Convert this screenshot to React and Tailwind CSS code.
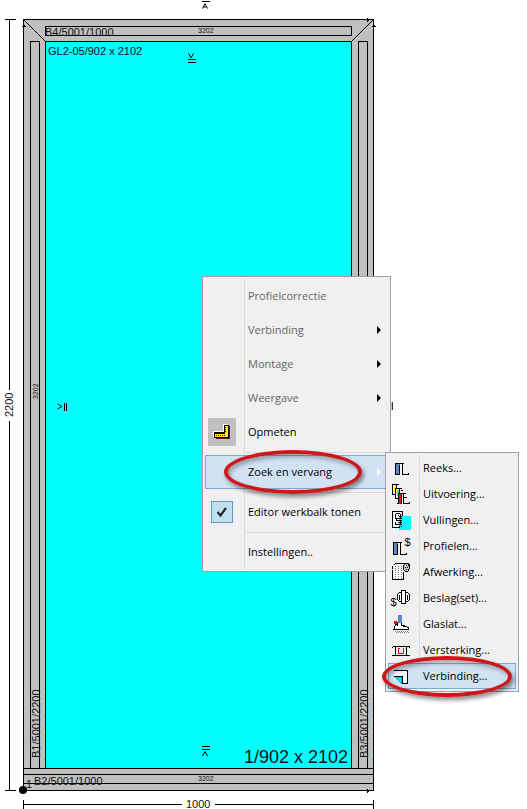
import React from "react";

const INK = "#000000";

/* Technical drawing of the window element */
function FrameDrawing() {
  return (
    <svg
      className="block h-[809px] w-[400px] shrink-0 font-['Liberation_Sans',Arial,sans-serif]"
      viewBox="0 0 400 809"
      role="img"
      aria-label="GL2-05/902 x 2102"
    >
      <g transform="translate(0.5 0.5)" stroke={INK} fill="none" shapeRendering="crispEdges">
        {/* height dimension */}
        <path d="M4 19H15M4 790H15M9 19V389M9 420V790" />
        {/* profiles and glass */}
        <rect x="23" y="19" width="350" height="771" fill="#c0c0c0" />
        <rect x="45" y="41" width="306" height="727" fill="#00ffff" />
        <rect x="45" y="26" width="306" height="9" />
        <rect x="30" y="41" width="9" height="727" />
        <rect x="358" y="41" width="9" height="727" />
        <path d="M23 768H373M23 774H373M23 783H373M23 19L45 41M373 19L351 41" />
        {/* direction arrows */}
        <path d="M21 26H25M22 25H24M371 26H375M372 25H374M367 17V21M368 18V20M367 788V792M368 789V791" />
        {/* width dimension */}
        <path d="M23 799V809M373 799V809M23 804H181M214 804H373" />
        {/* opening marks */}
        <path d="M201 1H209M187 59H195M187 62H195M201 746H209M201 749H209M64 402V410M66 402V410" />
      </g>
      <path d="M202.5 8.5L205 3.5L207.5 8.5M203.5 7H206.500M188.500 53.500L191 58L193.500 53.500M202.500 756L205 751.500L207.500 756M57.500 404L62 406.500L57.500 409" stroke={INK} fill="none" />
      <path d="M392.500 402V410" stroke="#26346b" />
      <path d="M391.500 402V410" stroke="#dcc49a" />
      <circle cx="23" cy="790" r="4" />
      <g fontSize="11" fill="#111111">
        <text x="45" y="36">B4/5001/1000</text>
        <text x="48" y="55">GL2-05/902 x 2102</text>
        <text x="26" y="788">1</text>
        <text x="34" y="785">B2/5001/1000</text>
        <text x="186" y="808">1000</text>
        <text transform="translate(13 417) rotate(-90)">2200</text>
        <text transform="translate(40 758) rotate(-90)">B1/5001/2200</text>
        <text transform="translate(368 758) rotate(-90)">B3/5001/2200</text>
      </g>
      <g fontSize="7" fill="#111111">
        <text x="198" y="33">3202</text>
        <text x="198" y="781">3202</text>
        <text transform="translate(38 399) rotate(-90)">3202</text>
      </g>
      <text x="244" y="763" fontSize="18" fill="#111111">1/902 x 2102</text>
    </svg>
  );
}

function Profile({ x, y, fill, h = 11 }) {
  return (
    <g transform={`translate(${x} ${y})`}>
      <rect x="1" y="0" width="4" height={h} fill={fill} stroke="none" />
      <path d={`M0 0H9M1 0V${h}M5 1V${h}M8 0V${h}M0 ${h}H5M8 ${h}H14M14 ${h}V${h - 2}`} />
    </g>
  );
}

const Dollar = ({ x, y }) => (
  <text x={x} y={y} fontSize="11" fill={INK} stroke="none" className="font-['Liberation_Sans',Arial,sans-serif]">
    $
  </text>
);

const Pattern = ({ id, color, back }) => (
  <pattern id={id} width="2" height="2" patternUnits="userSpaceOnUse">
    <rect width="2" height="2" fill={back} />
    <path d="M0 0h1v1h-1zM1 1h1v1h-1z" fill={color} stroke="none" />
  </pattern>
);

const icons = {
  reeks: <Profile x={6} y={8} fill="url(#blueDots)" />,
  uitvoering: (
    <>
      <path d="M3 3H10M4 3V13M4 13H6" />
      <rect x="5" y="4" width="3" height="6" fill="#ffff00" stroke="none" />
      <path d="M8 3V7M6 7H13M7 7V17M7 17H9" />
      <rect x="8" y="8" width="3" height="6" fill="#00ffff" stroke="none" />
      <path d="M11 7V11M9 12H17M10 12V22M8 22H13" />
      <rect x="10" y="12" width="3" height="10" fill="#e01515" stroke="none" />
      <path d="M9 12H17M13 12V22M15 12V22M15 22H21M21 20V22M12 9H14M15 16H18" />
    </>
  ),
  vullingen: (
    <>
      <path d="M4 4H14V20H4Z" fill="#ffffff" />
      <rect x="10" y="8" width="12" height="14" fill="#00ffff" stroke="none" />
      <path d="M7 6H11L12 7V11H8V13H12V17H7V14M7 6V11M4 20H11M9 8H10M9 15H10" />
      <path d="M10 9H14M10 11H14M10 13H14M10 15H14M10 17H14M10 19H14" strokeDasharray="1 1" />
    </>
  ),
  profielen: (
    <>
      <Profile x={4} y={9} h={12} fill="url(#blueDots)" />
      <Dollar x={16} y={12} />
    </>
  ),
  afwerking: (
    <>
      <path d="M6 4H18M4 6V9M5 5H6M4 10V20H15V12" fill="#ffffff" />
      <path d="M6 7H15M6 9H15M6 11H15M6 13H14M6 15H14M6 17H14M6 19H14" stroke="#777777" strokeDasharray="1 2" />
      <path d="M17 4H20L21 6V9L19 12H17L15 10V6Z" fill="#c9c9c9" />
      <path d="M17 6H20M16 8H20M17 10H19" strokeDasharray="1 1" />
    </>
  ),
  beslag: (
    <>
      <Dollar x={2} y={20} />
      <path d="M11 7H19L21 9V14L19 16H11L9 14V9Z" fill="#ffffff" />
      <path d="M13 5H17V18H13ZM11 9V14M19 9V14" fill="#ffffff" />
    </>
  ),
  glaslat: (
    <>
      <path d="M10 10L6 15V18H20V16L13 14V10Z" fill="#ffffff" />
      <path d="M9 12V14M5 18H20M13 14H16M5 17V18" />
      <rect x="9" y="3" width="4" height="8" fill="url(#blueDots)" stroke="none" />
      <path d="M6 10H8V12H6Z" fill="#e01515" stroke="#e01515" />
      <path d="M6 20H20M7 21H20" stroke="#888888" strokeDasharray="1 1" />
    </>
  ),
  versterking: (
    <>
      <path d="M4 9H21M4 9V10M21 9V10M7 9V18M18 9V18M4 18H9M16 18H21M4 17V18M21 17V18M9 18H16" />
      <path d="M11 11H10V16H15V11H14" stroke="#e01515" />
    </>
  ),
  verbinding: (
    <>
      <path d="M5 13V7H19V20H14V13Z" fill="#f4f7fb" stroke="none" />
      <path d="M5 7H19V20H14V13H5" />
      <path d="M7 14H13V20Z" fill="#00e5ef" stroke="#00bccc" />
    </>
  ),
};

const Arrow = ({ className }) => (
  <svg className={`mr-[7px] h-2 w-1 shrink-0 ${className}`} viewBox="0 0 4 8" aria-hidden="true">
    <path d="M0 0L4 4L0 8Z" fill="currentColor" />
  </svg>
);

const Ring = ({ className }) => (
  <span
    aria-hidden="true"
    className={`pointer-events-none absolute z-20 rounded-[50%] border-4 border-[#cd1719] shadow-[2px_3px_4px_rgba(0,0,0,0.45),inset_2px_3px_4px_rgba(0,0,0,0.3)] ${className}`}
  />
);

const Gutter = ({ children, plain }) => (
  <span
    className={`flex w-10 shrink-0 items-center justify-center self-stretch border-r ${
      plain ? "border-transparent" : "border-[#d9d9d9]"
    }`}
  >
    {children}
  </span>
);

function MenuRow({ label, disabled, arrow, icon }) {
  return (
    <li>
      <button
        type="button"
        disabled={disabled}
        className={`flex h-[34px] w-full items-center text-left ${disabled ? "text-[#666666]" : "text-black"}`}
      >
        <Gutter>{icon}</Gutter>
        <span className="grow pl-[3px]">{label}</span>
        {arrow && <Arrow className="text-black" />}
      </button>
    </li>
  );
}

const Separator = () => (
  <li role="separator" className="flex h-[6px] items-center">
    <Gutter />
    <span className="ml-px h-px grow bg-[#d9d9d9]" />
  </li>
);

const RulerIcon = () => (
  <span className="mr-[6px] flex size-7 items-center justify-center bg-[#c0c0c0]">
    <svg className="size-[18px]" viewBox="0 0 18 18" shapeRendering="crispEdges" aria-hidden="true">
      <path d="M12 3H17V16H3V11H12Z" fill="#5b1747" />
      <path d="M11 2H16V15H1V9H11Z" fill="#000000" />
      <path d="M12 3H15V14H2V11H12Z" fill="#ffe820" />
      <path d="M10 1H15V2H11V9H1V14H0V8H10Z" fill="#ffffff" />
      <path d="M12 4h1v1h-1zM12 6h1v1h-1zM12 8h1v1h-1zM3 12h1v1h-1zM5 12h1v1h-1zM7 12h1v1h-1zM9 12h1v1h-1zM11 12h1v1h-1z" fill="#222222" />
    </svg>
  </span>
);

const searchItems = [
  ["reeks", "Reeks..."],
  ["uitvoering", "Uitvoering..."],
  ["vullingen", "Vullingen..."],
  ["profielen", "Profielen..."],
  ["afwerking", "Afwerking..."],
  ["beslag", "Beslag(set)..."],
  ["glaslat", "Glaslat..."],
  ["versterking", "Versterking..."],
  ["verbinding", "Verbinding..."],
];

function SearchSubmenu() {
  return (
    <ul className="absolute -top-[3px] left-[180px] z-10 w-[134px] border border-[#a0a0a0] bg-[#f0f0f0] p-[2px]">
      {searchItems.map(([key, label]) => {
        const active = key === "verbinding";
        return (
          <li key={key} className="relative">
            <button
              type="button"
              className={`flex h-[26px] w-full items-center text-left ${
                active ? "bg-[#d1e2f2] outline outline-1 -outline-offset-1 outline-[#7da9d4]" : ""
              }`}
            >
              <span
                className={`w-8 shrink-0 border-r ${active ? "border-transparent" : "border-[#d9d9d9]"}`}
              >
                <svg className="block h-[26px] w-7" viewBox="0 0 28 26" aria-hidden="true">
                  <g transform="translate(0.5 0.5)" stroke={INK} fill="none" shapeRendering="crispEdges">
                    {icons[key]}
                  </g>
                </svg>
              </span>
              <span className="pl-[3px]">{label}</span>
            </button>
            {active && <Ring className="-left-[6px] -top-[7px] h-[41px] w-[130px]" />}
          </li>
        );
      })}
    </ul>
  );
}

function ContextMenu() {
  return (
    <ul className="absolute left-[202px] top-[276px] w-[189px] border border-[#a0a0a0] bg-[#f0f0f0] p-[2px] font-['Open_Sans','Noto_Sans',sans-serif] text-[11px] leading-4 text-black">
      <MenuRow label="Profielcorrectie" disabled />
      <MenuRow label="Verbinding" disabled arrow />
      <MenuRow label="Montage" disabled arrow />
      <MenuRow label="Weergave" disabled arrow />
      <MenuRow label="Opmeten" icon={<RulerIcon />} />
      <Separator />
      <li className="relative">
        <button
          type="button"
          aria-expanded="true"
          className="flex h-[34px] w-full items-center bg-[#d1e2f2] text-left outline outline-1 -outline-offset-1 outline-[#7da9d4]"
        >
          <Gutter plain />
          <span className="grow pl-[3px]">Zoek en vervang</span>
          <Arrow className="text-white" />
        </button>
        <SearchSubmenu />
        <Ring className="-top-[5px] left-[19px] h-[44px] w-[138px]" />
      </li>
      <Separator />
      <li>
        <label className="flex h-[34px] items-center">
          <Gutter>
            <span className="mr-[6px] grid size-[22px] place-items-center">
              <input
                type="checkbox"
                defaultChecked
                className="col-start-1 row-start-1 size-[22px] appearance-none border border-[#5a9dc0] bg-[#c3deec]"
              />
              <svg className="pointer-events-none col-start-1 row-start-1 size-3" viewBox="0 0 12 12" aria-hidden="true">
                <path d="M1.500 6L4.500 9.500L10 2" fill="none" stroke="#1c2733" strokeWidth="2.200" />
              </svg>
            </span>
          </Gutter>
          <span className="pl-[3px]">Editor werkbalk tonen</span>
        </label>
      </li>
      <Separator />
      <MenuRow label="Instellingen.." />
    </ul>
  );
}

export default function App() {
  return (
    <main className="relative flex min-h-screen w-full overflow-hidden bg-white">
      <svg className="absolute size-0" aria-hidden="true">
        <defs>
          <Pattern id="blueDots" color="#1f5fae" back="#8fb4dc" />
        </defs>
      </svg>
      <FrameDrawing />
      <ContextMenu />
    </main>
  );
}
